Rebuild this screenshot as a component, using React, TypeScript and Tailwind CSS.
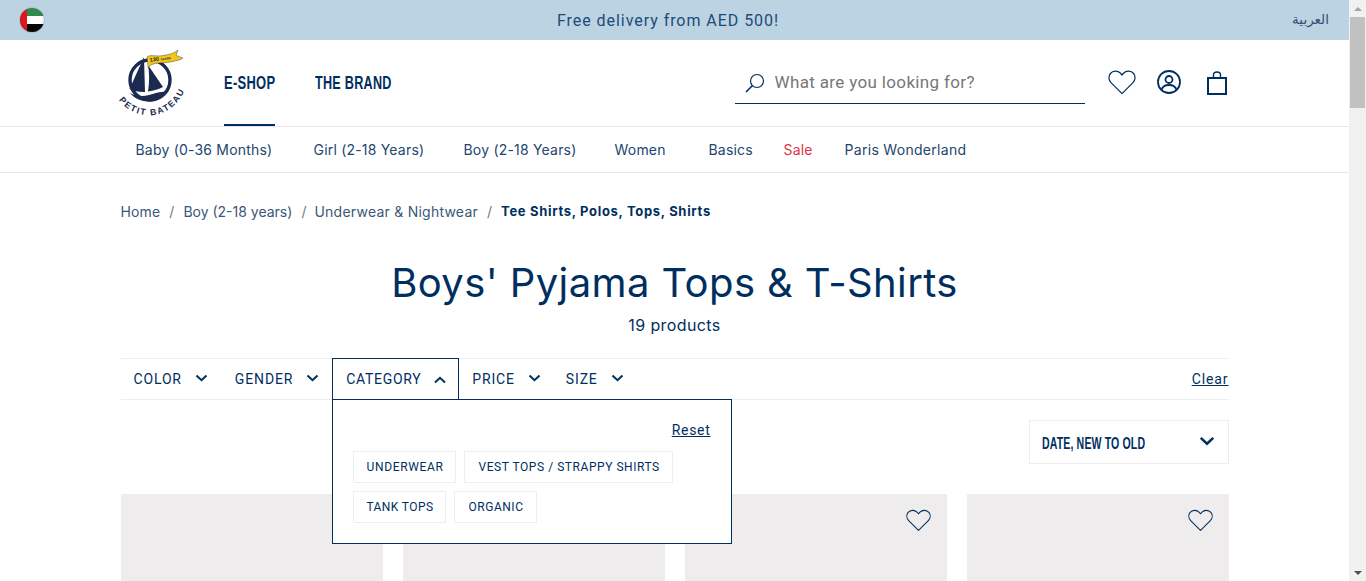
import React from "react";

function Heart({ className }: { className?: string }) {
  return (
    <svg viewBox="0 0 28 25" fill="none" stroke="currentColor" strokeWidth="1.2" className={className}>
      <path d="M14 23.600 3 12.600C.4 9.900.3 6 2.400 3.500 4.900.6 9.500.3 12.300 3L14 5l1.700-2c2.800-2.700 7.400-2.400 9.900.5 2.100 2.500 2 6.400-.6 9.100Z" strokeLinejoin="round" />
    </svg>
  );
}

function Chevron({ up, className }: { up?: boolean; className?: string }) {
  return (
    <svg viewBox="0 0 12 8" fill="none" stroke="currentColor" strokeWidth="2" className={className}>
      <path d={up ? "M1 6.500 6 1.800l5 4.700" : "M1 1.500 6 6.200l5-4.700"} />
    </svg>
  );
}

function Logo() {
  return (
    <svg viewBox="0 0 66 72" className="w-[66px] h-[72px] overflow-visible">
      <circle cx="30" cy="32" r="20" fill="#fff" stroke="#1b2a4e" strokeWidth="3.400" />
      <path d="M24 9 9.500 41c5 2.400 10 3.300 15.500 3Z" fill="#1b2a4e" />
      <path d="M28 17 43 39c-4 2-9 3.500-15 4.500 1.500-9 1.500-18 0-26.500Z" fill="#1b2a4e" />
      <path d="M10 45c6 3.500 13 3.500 19 2 5-1.300 11-3.800 18-3.500C44 49 37 53.500 30 53.500 21 53.500 14 50 10 45Z" fill="#1b2a4e" />
      <path d="M27 9c4-3 9 0 16-1.500 6-1 11-2 15-5.500l-2 5.500 7 2.500c-2 2-5 2-8 3-5 1.500-11 1.500-16 2-4 .5-8 1-11 4.500Z" fill="#f5c518" stroke="#1b2a4e" strokeWidth=".4" />
      <text x="30" y="14" fontSize="5.500" fontWeight="700" fill="#1b2a4e" fontFamily="'Liberation Sans',sans-serif" transform="rotate(-8 30 14)">130 <tspan fontSize="3">YEARS</tspan></text>
      <defs>
        <path id="logoarc" d="M-1 52C12 72 54 78 68 34" />
      </defs>
      <text fontSize="8.800" fontWeight="700" fill="#1b2a4e" letterSpacing="1.500" fontFamily="'Liberation Sans',sans-serif">
        <textPath href="#logoarc">PETIT BATEAU</textPath>
      </text>
    </svg>
  );
}

function Flag() {
  return (
    <div className="relative w-6 h-6 rounded-full overflow-hidden flex shadow-[0_0_1px_#333]">
      <div className="w-[7px] bg-[#e0171c]" />
      <div className="flex-1 flex flex-col">
        <div className="h-2 bg-[#2f8a4e]" />
        <div className="h-2 bg-[#fdfdfd]" />
        <div className="h-2 bg-[#050505]" />
      </div>
      <div className="absolute inset-0 rounded-full bg-[radial-gradient(circle_at_50%_45%,transparent_55%,rgba(0,0,0,0.35)_100%)]" />
    </div>
  );
}

function FilterTab({ label, className }: { label: string; className: string }) {
  return (
    <div className={`flex items-center h-full pl-[13px] ${className}`}>
      <span className="pt-[1px] text-[14px] tracking-[0.85px] font-['Roboto',sans-serif]">{label}</span>
      <Chevron className="w-[13px] h-[8px] -mt-[3px] ml-[13px]" />
    </div>
  );
}

function Chip({ label, className }: { label: string; className: string }) {
  return (
    <div className={`h-8 pl-[13px] pr-[12px] flex items-center border border-[#eeeeee] text-[12px] font-['Roboto',sans-serif] ${className}`}>
      {label}
    </div>
  );
}

function Card({ heart }: { heart?: boolean }) {
  return (
    <div className="h-[120px] bg-[#eeecec] flex justify-end pt-[15px] pr-[16px]">
      {heart && <Heart className="w-[25px] h-[23px] text-[#002f5f]" />}
    </div>
  );
}

export default function App() {
  const navItems = [
    ["Baby (0-36 Months)", "w-[178px]"],
    ["Girl (2-18 Years)", "w-[150px]"],
    ["Boy (2-18 Years)", "w-[151px]"],
    ["Women", "w-[94px]"],
    ["Basics", "w-[75px]"],
  ];
  return (
    <div className="flex h-[581px] w-[1366px] overflow-hidden bg-white text-[#002f5f] font-['Inter',sans-serif]">
      <div className="w-[1349px] shrink-0 overflow-hidden">
        <div className="h-10 bg-[#bcd3e3] flex items-center justify-between pl-5 pr-5">
          <Flag />
          <div className="pt-[1px] text-[16px] tracking-[0.95px] text-[#1d4b78] font-['Roboto',sans-serif]">Free delivery from AED 500!</div>
          <div className="w-[37px] pb-[1px] text-[13.5px] text-[#33506e] font-['DejaVu_Sans',sans-serif] leading-none whitespace-nowrap" dir="rtl">العربية</div>
        </div>

        <div className="border-b border-[#e6e6e6] h-[87px]">
          <div className="w-[1108px] mx-auto h-full flex items-start">
            <div className="mt-[8px] -ml-[1px] w-[66px]"><Logo /></div>
            <div className="ml-[38px] w-[51px] h-[86px] pt-[2px] border-b-2 border-[#002f5f] flex items-center whitespace-nowrap">
              <span className="inline-block origin-left scale-x-[.72] text-[18px] font-bold tracking-[0.4px] font-['Liberation_Sans',sans-serif]">E-SHOP</span>
            </div>
            <div className="ml-[40px] w-[77px] h-[86px] flex items-center whitespace-nowrap">
              <span className="inline-block origin-left scale-x-[.70] text-[18px] font-bold tracking-[0.4px] font-['Liberation_Sans',sans-serif]">THE BRAND</span>
            </div>
            <div className="ml-auto mt-[24px] w-[350px] h-[40px] border-b border-[#002f5f] flex items-center pl-[10px] pb-[2px]">
              <svg viewBox="0 0 20 20" fill="none" stroke="currentColor" strokeWidth="1.200" className="w-[20px] h-[20px]">
                <circle cx="12" cy="8" r="6.500" />
                <path d="M7.500 12.500 1 19" strokeWidth="1.600" />
              </svg>
              <input placeholder="What are you looking for?" className="ml-[10px] flex-1 text-[17px] tracking-[0.35px] outline-none placeholder:text-[#777777] font-['Roboto',sans-serif]" />
            </div>
            <div className="ml-[23px] mt-[30px]"><Heart className="w-[28px] h-[25px]" /></div>
            <svg viewBox="0 0 24 24" fill="none" stroke="currentColor" strokeWidth="1.800" className="ml-[21px] mt-[30px] w-[24px] h-[24px]">
              <circle cx="12" cy="12" r="11" />
              <circle cx="12" cy="9.500" r="3.500" />
              <path d="M4.500 20c1-4 4-5 7.500-5s6.500 1 7.500 5" />
            </svg>
            <svg viewBox="0 0 20 24" fill="none" stroke="currentColor" className="ml-[26px] mt-[31px] w-[20px] h-[24px]">
              <path d="M1 7h18v16H1Z" strokeWidth="2" />
              <path d="M6.500 7V4c0-4 7-4 7 0v3" strokeWidth="1.400" />
            </svg>
            <div className="w-[2px]" />
          </div>
        </div>

        <div className="border-b border-[#e6e6e6] h-[46px]">
          <div className="w-[1108px] mx-auto h-full flex items-center pl-[15px] pb-[1px] text-[14px] tracking-[0.2px] text-[#22466e] whitespace-nowrap">
            {navItems.map(([t, w]) => (
              <div key={t} className={w}>{t}</div>
            ))}
            <div className="w-[61px] text-[#e0334c]">Sale</div>
            <div className="tracking-[0.3px]">Paris Wonderland</div>
          </div>
        </div>

        <div className="w-[1108px] mx-auto">
          <div className="mt-[28px] h-5 flex items-center text-[14px] text-[#3a5878] whitespace-nowrap">
            <span className="tracking-[0.15px]">Home</span>
            <span className="mx-[9px] text-[#777777]">/</span>
            <span>Boy (2-18 years)</span>
            <span className="mx-[9px] text-[#777777]">/</span>
            <span className="tracking-[0.24px] -ml-[1px]">Underwear &amp; Nightwear</span>
            <span className="mx-[9px] text-[#777777]">/</span>
            <span className="pt-[1px] font-bold text-[#002f5f] text-[13px] tracking-[0.68px]">Tee Shirts, Polos, Tops, Shirts</span>
          </div>

          <h1 className="mt-[38px] h-[48px] leading-[48px] text-center text-[40px] tracking-[0.4px] font-normal">Boys' Pyjama Tops &amp; T-Shirts</h1>
          <div className="mt-[6px] h-6 leading-6 text-center text-[16px] tracking-[0.4px]">19 products</div>

          <div className="relative mt-[21px] h-[42px] border-y border-[#eaeef2] flex items-center">
            <div className="flex items-center h-full">
              <FilterTab label="COLOR" className="pr-[14px]" />
              <FilterTab label="GENDER" className="pr-[13px]" />
              <div className="relative z-10 -my-[1px] h-[42px] w-[127px] border-x border-t border-[#002f5f] bg-white flex items-center pl-[13px]">
                <span className="text-[14px] tracking-[0.7px] font-['Roboto',sans-serif]">CATEGORY</span>
                <Chevron up className="w-[12px] h-[8px] ml-[13px]" />
              </div>
              <FilterTab label="PRICE" className="pr-[12px]" />
              <FilterTab label="SIZE" className="pr-[13px]" />
            </div>
            <a className="ml-auto pt-[1px] text-[14px] underline tracking-[0.9px] font-['Roboto',sans-serif]">Clear</a>

            <div className="absolute z-20 left-[211px] top-[40px] w-[400px] h-[145px] bg-white border border-[#002f5f] px-[20px] pt-[21px]">
              <div className="flex justify-end"><a className="text-[14px] underline tracking-[0.7px] font-['Roboto',sans-serif] leading-[18px]">Reset</a></div>
              <div className="mt-[12px] flex flex-wrap gap-x-[8px] gap-y-[8px]">
                <Chip label="UNDERWEAR" className="tracking-[0.65px]" />
                <Chip label="VEST TOPS / STRAPPY SHIRTS" className="tracking-[0.55px]" />
                <Chip label="TANK TOPS" className="tracking-[0.4px]" />
                <Chip label="ORGANIC" className="tracking-[0.55px]" />
              </div>
            </div>
          </div>

          <div className="mt-[20px] flex justify-end">
            <div className="w-[200px] h-[44px] border border-[#eeeeee] flex items-center justify-between pl-[12px] pr-[13px] whitespace-nowrap">
              <span className="inline-block pt-[3px] w-[105px] origin-left scale-x-[.66] text-[16px] font-bold tracking-[0.2px] font-['Liberation_Sans',sans-serif]">DATE, NEW TO OLD</span>
              <Chevron className="w-[16px] h-[10px] -mt-[2px]" />
            </div>
          </div>

          <div className="mt-[30px] grid grid-cols-4 gap-x-[20px]">
            <Card />
            <Card />
            <Card heart />
            <Card heart />
          </div>
        </div>
      </div>

      <div className="w-[17px] shrink-0 bg-[#f1f1f1] flex flex-col items-center">
        <div className="h-[17px] flex items-center justify-center">
          <div className="w-0 h-0 border-x-[4px] border-x-transparent border-b-[4px] border-b-[#a3a3a3]" />
        </div>
        <div className="w-[15px] h-[91px] bg-[#c1c1c1]" />
        <div className="mt-auto h-[17px] flex items-center justify-center">
          <div className="w-0 h-0 border-x-[4px] border-x-transparent border-t-[4px] border-t-[#505050]" />
        </div>
      </div>
    </div>
  );
}
